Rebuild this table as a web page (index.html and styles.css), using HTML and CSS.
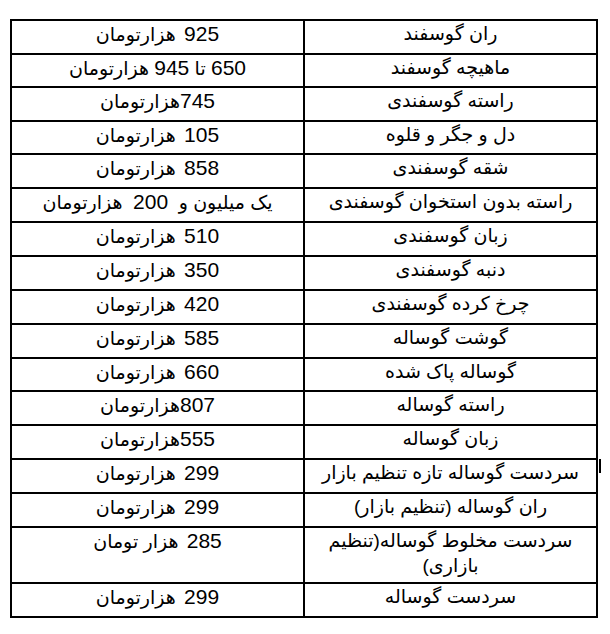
FILE: index.html
```html
<!DOCTYPE html>
<html lang="fa">
<head>
<meta charset="utf-8">
<link rel="stylesheet" href="styles.css">
</head>
<body>
<div class="sheet">
<table class="prices" dir="rtl">
<tbody>
<tr><td>ران گوسفند</td><td><span class="n g">925</span> هزارتومان</td></tr>
<tr class="s"><td>ماهیچه گوسفند</td><td><span class="n">650</span> تا <span class="n">945</span> هزارتومان</td></tr>
<tr><td>راسته گوسفندی</td><td><span class="n">745</span>هزارتومان</td></tr>
<tr class="s"><td>دل و جگر و قلوه</td><td><span class="n g">105</span> هزارتومان</td></tr>
<tr><td>شقه گوسفندی</td><td><span class="n g">858</span> هزارتومان</td></tr>
<tr><td>راسته بدون استخوان گوسفندی</td><td>یک میلیون و&nbsp; <span class="n">200</span>&nbsp; هزارتومان</td></tr>
<tr><td>زبان گوسفندی</td><td><span class="n g">510</span> هزارتومان</td></tr>
<tr><td>دنبه گوسفندی</td><td><span class="n g">350</span> هزارتومان</td></tr>
<tr><td>چرخ کرده گوسفندی</td><td><span class="n g">420</span> هزارتومان</td></tr>
<tr><td>گوشت گوساله</td><td><span class="n g">585</span> هزارتومان</td></tr>
<tr class="s"><td>گوساله پاک شده</td><td><span class="n g">660</span> هزارتومان</td></tr>
<tr><td>راسته گوساله</td><td><span class="n">807</span>هزارتومان</td></tr>
<tr><td>زبان گوساله</td><td><span class="n">555</span>هزارتومان</td></tr>
<tr><td>سردست گوساله تازه تنظیم بازار</td><td><span class="n g">299</span> هزارتومان</td></tr>
<tr><td>ران گوساله (تنظیم بازار)</td><td><span class="n g">299</span> هزارتومان</td></tr>
<tr class="tall"><td>سردست مخلوط گوساله(تنظیم<br>بازاری)</td><td><span class="n g">285</span> هزار تومان</td></tr>
<tr><td>سردست گوساله</td><td><span class="n g">299</span> هزارتومان</td></tr>
</tbody>
</table>
<span class="stray"></span>
</div>
</body>
</html>
```
FILE: styles.css
```css
html, body {
  margin: 0;
  padding: 0;
  background: #fff;
}
.sheet {
  position: relative;
  padding: 19px 0 0 10px;
}
.prices {
  border-collapse: collapse;
  width: 588px;
  table-layout: fixed;
  font-family: "Liberation Sans", "DejaVu Sans", sans-serif;
  font-size: 19px;
  color: #000;
}
.prices td {
  width: 50%;
  border: 2px solid #000;
  padding: 0 4px;
  box-sizing: border-box;
  height: 34px;
  vertical-align: top;
  text-align: center;
  line-height: 25px;
  white-space: nowrap;
}
.prices tr.s td {
  height: 33px;
}
.prices tr.tall td {
  height: 56px;
}
.n {
  font-size: 21px;
}
.n.g {
  margin-left: 3px;
}
.stray {
  position: absolute;
  left: 599px;
  top: 459px;
  width: 2px;
  height: 14px;
  background: #000;
}
```
